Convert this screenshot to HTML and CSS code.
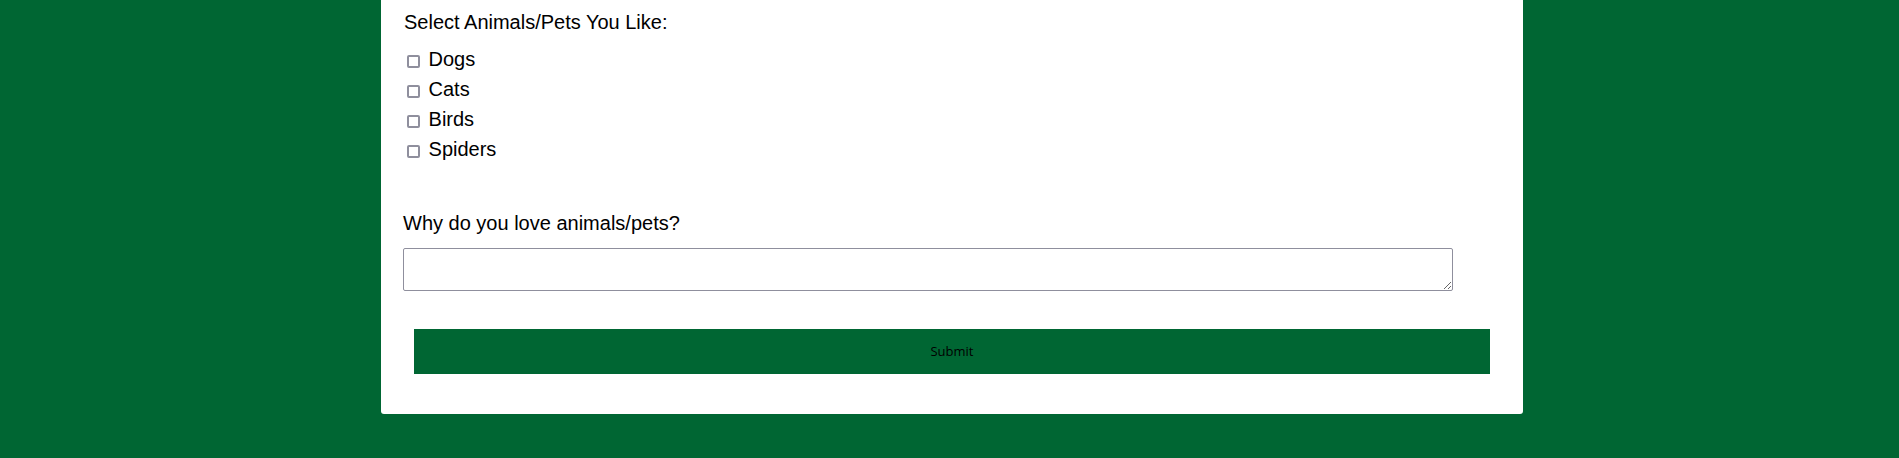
FILE: index.html
```html
<!DOCTYPE html>
<html lang="en">
<head>
<meta charset="utf-8">
<title>Animals Survey</title>
<link rel="stylesheet" href="styles.css">
</head>
<body>
<div class="page">
  <form class="card">
    <fieldset class="group">
      <p class="question first">Select Animals/Pets You Like:</p>
      <label class="option"><input type="checkbox" name="pets" value="dogs"> Dogs</label>
      <label class="option"><input type="checkbox" name="pets" value="cats"> Cats</label>
      <label class="option"><input type="checkbox" name="pets" value="birds"> Birds</label>
      <label class="option"><input type="checkbox" name="pets" value="spiders"> Spiders</label>
    </fieldset>
    <label class="question why" for="why">Why do you love animals/pets?</label>
    <textarea id="why" class="why-box" name="why"></textarea>
    <div class="actions">
      <button type="submit" class="submit">Submit</button>
    </div>
  </form>
</div>
</body>
</html>
```

FILE: styles.css
```css
html, body {
  margin: 0;
  padding: 0;
}

body {
  background: #006633;
  font-family: "Liberation Sans", Arial, sans-serif;
  font-size: 20px;
  color: #000;
}

.page {
  padding: 0 0 43px 5px;
}

.card {
  width: 1142px;
  margin: 0 auto;
  background: #fff;
  border-radius: 0 0 3px 3px;
  padding: 11px 0 40px 22px;
  box-sizing: border-box;
}

.group {
  border: 0;
  margin: 0;
  padding: 0;
}

.question {
  display: block;
  margin: 0;
  line-height: 23px;
}

.question.first {
  margin-left: 1px;
  margin-bottom: 10px;
}

.option {
  display: block;
  line-height: 30px;
  height: 30px;
}

.option input {
  -webkit-appearance: none;
  appearance: none;
  width: 13px;
  height: 13px;
  box-sizing: border-box;
  border: 2px solid #8f8f9d;
  border-radius: 2px;
  background: #fff;
  margin: 3px 3px 2px 4px;
  vertical-align: text-bottom;
}

.option input:checked {
  background: #0060df;
  border-color: #0060df;
}

.why {
  margin-top: 48px;
}

.why-box {
  display: block;
  width: 1050px;
  height: 43px;
  box-sizing: border-box;
  margin: 13px 0 0;
  border: 1px solid #8f8f9d;
  border-radius: 2px;
}

.actions {
  padding: 38px 33px 0 11px;
}

.submit {
  display: block;
  width: 100%;
  height: 45px;
  padding: 0 0 2px;
  border: 0;
  background: #006633;
  color: #000;
  font-family: "Open Sans", sans-serif;
  font-size: 13px;
  cursor: pointer;
}
```
